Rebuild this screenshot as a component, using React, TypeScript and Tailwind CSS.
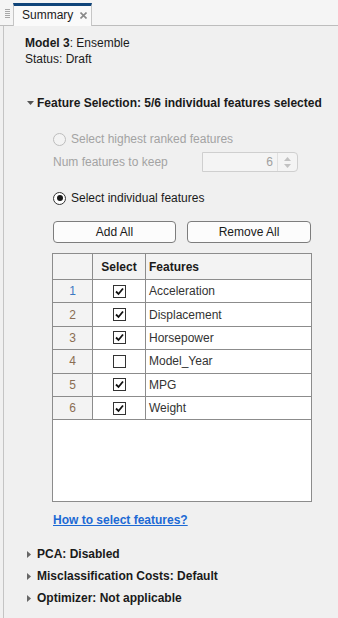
import React from "react";

const rows = [
  { n: 1, on: true, f: "Acceleration" },
  { n: 2, on: true, f: "Displacement" },
  { n: 3, on: true, f: "Horsepower" },
  { n: 4, on: false, f: "Model_Year" },
  { n: 5, on: true, f: "MPG" },
  { n: 6, on: true, f: "Weight" },
];

function Check({ on }: { on: boolean }) {
  return (
    <div className="w-[13px] h-[13px] border border-[#333] bg-white flex items-center justify-center">
      {on && (
        <svg width="11" height="11" viewBox="0 0 11 11">
          <path d="M2 5.5 L4.5 8 L9 2.5" fill="none" stroke="#111" strokeWidth="1.8" />
        </svg>
      )}
    </div>
  );
}

function TriDown() {
  return (
    <svg width="7" height="4" viewBox="0 0 7 4" className="ml-[2px] mr-[3px]">
      <path d="M0 0 H7 L3.5 4 Z" fill="#555" />
    </svg>
  );
}

function TriRight() {
  return (
    <svg width="4" height="7" viewBox="0 0 4 7" className="ml-[2px] mr-[6px]">
      <path d="M0 0 V7 L4 3.5 Z" fill="#666" />
    </svg>
  );
}

export default function App() {
  return (
    <div className="w-[338px] h-[618px] bg-[#f0f0f0] text-[12px] text-[#1a1a1a] overflow-hidden font-['Liberation_Sans',Arial,sans-serif]">
      {/* tab bar */}
      <div className="h-[26px] bg-[#f5f5f5] border-b border-[#bdbdbd] flex items-end pl-[5px]">
        <div className="w-[5px] h-[9px] mb-[7px] mr-[3px] flex flex-col justify-between">
          <div className="h-px bg-[#a8a8a8]" />
          <div className="h-px bg-[#a8a8a8]" />
          <div className="h-px bg-[#a8a8a8]" />
          <div className="h-px bg-[#a8a8a8]" />
          <div className="h-px bg-[#a8a8a8]" />
        </div>
        <div className="w-[79px] h-[23px] -mb-px bg-[#fafafa] border-x border-[#c6c6c6] border-t-[3px] border-t-[#10457a] flex items-center pl-[8px] pb-[3px]">
          <span>Summary</span>
          <svg width="7" height="7" viewBox="0 0 7 7" className="ml-[7px] mt-[1px]">
            <path d="M0.5 0.5 L6.5 6.5 M6.5 0.5 L0.5 6.5" stroke="#8a8a8a" strokeWidth="1.6" />
          </svg>
        </div>
      </div>

      {/* content */}
      <div className="ml-[3px] border-l border-[#c4c4c4] h-[592px] pl-[21px] pt-[9px]">
        <div className="leading-[16px]">
          <span className="font-bold">Model 3</span>: Ensemble
        </div>
        <div className="leading-[16px]">Status: Draft</div>

        <div className="mt-[28px] h-[16px] flex items-center font-bold">
          <TriDown />
          <span>Feature Selection: 5/6 individual features selected</span>
        </div>

        <div className="pl-[28px]">
          <div className="mt-[20px] h-[16px] flex items-center text-[#a3a3a3]">
            <div className="w-[13px] h-[13px] rounded-full border border-[#bdbdbd] bg-[#f3f3f3]" />
            <span className="ml-[5px]">Select highest ranked features</span>
          </div>

          <div className="mt-[5px] h-[20px] flex items-center text-[#a3a3a3]">
            <span className="w-[149px]">Num features to keep</span>
            <div className="w-[96px] h-[20px] border border-[#cfcfcf] rounded-r-[4px] bg-[#f4f4f4] flex">
              <div className="flex-1 flex items-center justify-end pr-[4px] text-[#a0a0a0]">6</div>
              <div className="w-[20px] border-l border-[#e0e0e0] flex flex-col items-center justify-center gap-[3px]">
                <svg width="7" height="4" viewBox="0 0 7 4"><path d="M0 4 H7 L3.5 0 Z" fill="#c2c2c2" /></svg>
                <svg width="7" height="4" viewBox="0 0 7 4"><path d="M0 0 H7 L3.5 4 Z" fill="#c2c2c2" /></svg>
              </div>
            </div>
          </div>

          <div className="mt-[18px] h-[16px] flex items-center">
            <div className="w-[13px] h-[13px] rounded-full border border-[#333] bg-white flex items-center justify-center">
              <div className="w-[6px] h-[6px] rounded-full bg-[#1a1a1a]" />
            </div>
            <span className="ml-[5px]">Select individual features</span>
          </div>

          <div className="mt-[15px] flex gap-[11px]">
            <div className="w-[123px] h-[22px] border border-[#7d7d7d] rounded-[4px] bg-[#fcfcfc] flex items-center justify-center">Add All</div>
            <div className="w-[124px] h-[22px] border border-[#7d7d7d] rounded-[4px] bg-[#fcfcfc] flex items-center justify-center">Remove All</div>
          </div>

          <div className="mt-[10px] -ml-px w-[260px] h-[249px] border border-[#8c8c8c] bg-white">
            <div className="flex h-[26px] bg-[#f3f3f3] border-b border-[#8c8c8c] font-bold">
              <div className="w-[40px] border-r border-[#8c8c8c]" />
              <div className="w-[53px] border-r border-[#8c8c8c] flex items-center justify-center">Select</div>
              <div className="flex-1 flex items-center pl-[3px]">Features</div>
            </div>
            {rows.map((r) => (
              <div key={r.n} className="flex h-[23.4px] border-b border-[#8c8c8c] text-[#333]">
                <div
                  className={
                    "w-[40px] border-r border-[#8c8c8c] bg-[#f3f3f3] flex items-center justify-center " +
                    (r.n === 1 ? "text-[#3b78c2]" : "text-[#8a6d52]")
                  }
                >
                  {r.n}
                </div>
                <div className="w-[53px] border-r border-[#8c8c8c] flex items-center justify-center">
                  <Check on={r.on} />
                </div>
                <div className="flex-1 flex items-center pl-[3px]">{r.f}</div>
              </div>
            ))}
          </div>

          <div className="mt-[10px] leading-[16px]">
            <span className="font-bold text-[#1c69d4] underline">How to select features?</span>
          </div>
        </div>

        <div className="mt-[18px] h-[16px] flex items-center font-bold">
          <TriRight />
          <span>PCA: Disabled</span>
        </div>
        <div className="mt-[6px] h-[16px] flex items-center font-bold">
          <TriRight />
          <span>Misclassification Costs: Default</span>
        </div>
        <div className="mt-[6px] h-[16px] flex items-center font-bold">
          <TriRight />
          <span>Optimizer: Not applicable</span>
        </div>
      </div>
    </div>
  );
}
